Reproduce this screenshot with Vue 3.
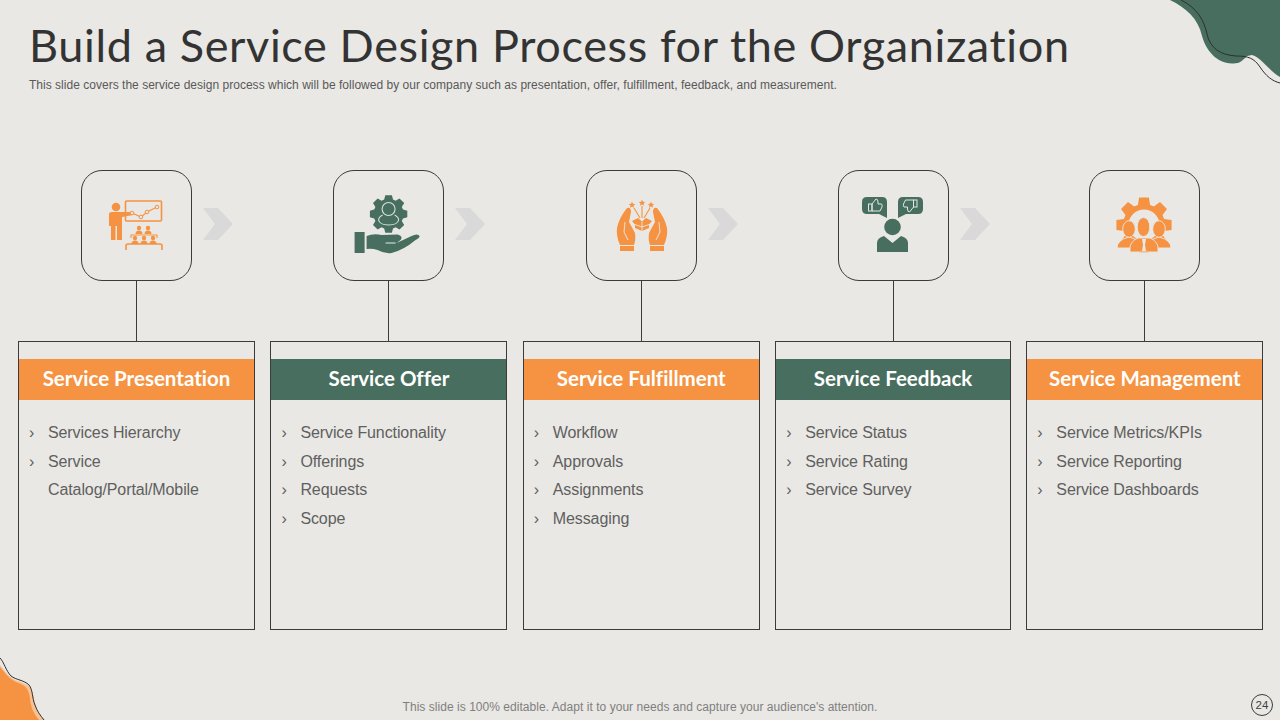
<template>
    <div class="slide">
        <svg class="blob-top" viewBox="1160 0 120 90">
            <path class="blob-green" d="M1170 0 C1186 8 1198 18 1202 36 C1206 50 1216 63 1232 63.5 C1240 64 1243 60 1247 56 L1252 55 C1262 58 1266 68 1280 77 V0 Z" />
            <path class="blob-line" d="M1181 0 C1197 8 1204 20 1207 34 C1210 48 1220 55 1236 56 C1248 56 1254 58 1260 67 C1266 76 1272 81 1280 83" />
        </svg>
        <svg class="blob-bottom" viewBox="0 650 60 70">
            <path class="blob-orange-light" d="M0 665 C5 671 9 678 18 681 C28 684 33 688 34 699 C35 708 38 714 44 720 H0 Z" />
            <path class="blob-orange" d="M0 667 C5 673 8 678 16 682 C25 685 29 688 30 699 C31 708 34 714 39 720 H0 Z" />
            <path class="blob-line" d="M0 658 C4 662 6 671 11 676 C16 680 24 680 29 685 C33 690 32 698 35 705 C37 711 40 715 44 720" />
        </svg>

        <header class="slide-head">
            <h1 class="slide-title">Build a Service Design Process for the Organization</h1>
            <p class="slide-sub">This slide covers the service design process which will be followed by our company such as presentation, offer, fulfillment, feedback, and measurement.</p>
        </header>

        <main class="columns">
            <section v-for="(col, i) in columns" :key="col.title" class="column">
                <div class="icon-row">
                    <div class="icon-box">
                        <!-- Presenter with chart and audience -->
                        <svg v-if="col.icon === 'presenter'" class="icon" viewBox="82 171 109 109">
                            <circle class="fo" cx="116" cy="207" r="4.3" />
                            <path class="fo" d="M109 214 Q109 212 112 212 H120 L133 212 V215 L122 217 V240 H117 V226 H115.5 V240 H111 V226 H109 Z" />
                            <rect class="so" x="125.5" y="201" width="36" height="20" rx="1" />
                            <polyline class="so thin" points="132,213 141,217 147,212 157,207" />
                            <circle v-for="p in chartDots" :key="p[0]" class="dot" :cx="p[0]" :cy="p[1]" r="1.8" />
                            <g v-for="p in audience" :key="p[0] + '-' + p[1]">
                                <circle class="fo" :cx="p[0]" :cy="p[1]" r="2.2" />
                                <path class="fo" :d="`M${p[0] - 3.5} ${p[1] + 6} q0 -3.5 3.5 -3.5 q3.5 0 3.5 3.5 z`" />
                            </g>
                            <path class="so thin" d="M131 238 V235 H157 V238" />
                            <path class="so" d="M126 250 V246 Q126 244 128 244 H160 Q162 244 162 246 V250" />
                        </svg>

                        <!-- Hand holding a gear with a person -->
                        <svg v-else-if="col.icon === 'hand'" class="icon" viewBox="334.4 171 109 109">
                            <path class="fg" :d="gearPath(389, 214, 19, 15, 8)" />
                            <circle class="sl" cx="389" cy="209" r="6.5" />
                            <path class="sl" d="M383 215 Q379 217 379 220 Q380 225 389 225 Q398 225 399 220 Q399 217 395 215" />
                            <rect class="fg" x="355" y="232" width="10" height="21" />
                            <path class="fg" d="M367 236 Q374 233 382 235 L398 234.5 Q404 236 401 240 L397 243 L412 236 Q418 233 420 236 Q420 238 416 240 Q404 250 392 253 Q385 254 378 250 Q372 248 367 249 Z" />
                            <path class="sl" d="M386 243 H396" />
                        </svg>

                        <!-- Two hands around an opening box -->
                        <svg v-else-if="col.icon === 'hands'" class="icon" viewBox="587 171 109 109">
                            <g v-for="m in ['', 'translate(1284 0) scale(-1 1)']" :key="m" :transform="m">
                                <path class="fo" d="M627 208 Q631 207 631 212 L629 222 L635 233 Q636 240 634 245 H620 Q616 236 617 228 Q619 218 627 208 Z" />
                                <path class="sb" d="M625 222 L624 232 L628 240" />
                                <rect class="fo" x="620" y="246" width="14" height="5" />
                            </g>
                            <path class="fo" d="M632 221 L638 218 L642 221.5 L646 218 L652 221 L649 224.5 V228 L642 231 L635 228 V224.5 Z" />
                            <path class="sb" d="M635 224.5 L642 227 L649 224.5 M642 221.5 V231" />
                            <path class="so thin" d="M640 218 L634 208 M642 218 V206 M644 218 L650 208" />
                            <path v-for="s in stars" :key="s[0]" class="fo" :d="starPath(s[0], s[1], 3.5)" />
                        </svg>

                        <!-- Person with thumbs up and down bubbles -->
                        <svg v-else-if="col.icon === 'feedback'" class="icon" viewBox="839 171 109 109">
                            <path class="fg" d="M867 197 H882 Q887 197 887 202 V218 L879 214 H867 Q862 214 862 209 V202 Q862 197 867 197 Z" />
                            <path class="fg" d="M903 197 H918 Q923 197 923 202 V209 Q923 214 918 214 H906 L898 218 V202 Q898 197 903 197 Z" />
                            <g class="thumb">
                                <rect x="868.5" y="204" width="3.5" height="7" />
                                <path d="M872 204 L876 199 Q878 199 878 202 V204 H881.5 Q882.5 205 882 207 L880 211 H872 Z" />
                            </g>
                            <g class="thumb" transform="rotate(180 910.5 205.5)">
                                <rect x="904" y="204" width="3.5" height="7" />
                                <path d="M907.5 204 L911.5 199 Q913.5 199 913.5 202 V204 H917 Q918 205 917.5 207 L915.5 211 H907.5 Z" />
                            </g>
                            <circle class="fg" cx="892.5" cy="227" r="8.3" />
                            <path class="fg" d="M877 252 V243 Q877 238 884 236 L892.5 243 L901 236 Q908 238 908 243 V252 Z" />
                        </svg>

                        <!-- Team in front of a gear -->
                        <svg v-else class="icon" viewBox="1090 171 109 109">
                            <path class="fo" :d="gearPath(1144, 225, 28, 21, 8)" />
                            <circle class="fb" cx="1144" cy="225" r="15.5" />
                            <g v-for="x in [1129, 1159]" :key="x">
                                <path class="fo edge" :d="`M${x - 12} 248 Q${x - 12} 240 ${x} 237 Q${x + 12} 240 ${x + 12} 248 Z`" />
                                <ellipse class="fo edge" :cx="x" :cy="229" rx="6.3" ry="8.3" />
                            </g>
                            <path class="fo edge" d="M1130 252 V247 Q1131 241 1138 238 H1150 Q1157 241 1158 247 V252 Z" />
                            <ellipse class="fo edge" cx="1143.5" cy="227" rx="6.3" ry="9.5" />
                            <path class="fb" d="M1142 239 H1146 L1145 245 L1146 251 H1142 L1143 245 Z" />
                        </svg>
                    </div>
                    <svg v-if="i < columns.length - 1" class="chevron" viewBox="0 0 30 32">
                        <path d="M0 0 H15 L30 16 L15 32 H0 L12 16 Z" />
                    </svg>
                </div>
                <div class="connector"></div>
                <div class="card">
                    <h2 class="card-title" :class="col.tone">{{ col.title }}</h2>
                    <ul class="card-list">
                        <li v-for="item in col.items" :key="item">{{ item }}</li>
                    </ul>
                </div>
            </section>
        </main>

        <footer class="slide-foot">
            <p class="foot-text">This slide is 100% editable. Adapt it to your needs and capture your audience's attention.</p>
            <span class="page-num">24</span>
        </footer>
    </div>
</template>

<script setup>
const columns = [
    { title: 'Service Presentation', tone: 'orange', icon: 'presenter', items: ['Services Hierarchy', 'Service Catalog/Portal/Mobile'] },
    { title: 'Service Offer', tone: 'green', icon: 'hand', items: ['Service Functionality', 'Offerings', 'Requests', 'Scope'] },
    { title: 'Service Fulfillment', tone: 'orange', icon: 'hands', items: ['Workflow', 'Approvals', 'Assignments', 'Messaging'] },
    { title: 'Service Feedback', tone: 'green', icon: 'feedback', items: ['Service Status', 'Service Rating', 'Service Survey'] },
    { title: 'Service Management', tone: 'orange', icon: 'team', items: ['Service Metrics/KPIs', 'Service Reporting', 'Service Dashboards'] },
]

const chartDots = [[132, 213], [141, 217], [147, 212], [157, 207]]
const audience = [[139, 228], [148, 228], [135, 238], [144, 238], [153, 238]]
const stars = [[632, 205], [642, 203], [651, 205]]

// Gear outline with square-ish teeth
const gearPath = (cx, cy, outer, inner, teeth) => {
    const step = (Math.PI * 2) / teeth
    const pts = []
    for (let i = 0; i < teeth; i++) {
        const a = i * step - Math.PI / 2
        const spots = [[inner, -0.5], [outer, -0.3], [outer, 0.3], [inner, 0.5]]
        for (const [r, k] of spots) {
            pts.push(`${(cx + r * Math.cos(a + k * step * 0.75)).toFixed(1)} ${(cy + r * Math.sin(a + k * step * 0.75)).toFixed(1)}`)
        }
    }
    return `M${pts.join(' L')} Z`
}

const starPath = (cx, cy, r) => {
    const pts = []
    for (let i = 0; i < 10; i++) {
        const a = (i * Math.PI) / 5 - Math.PI / 2
        const d = i % 2 ? r * 0.45 : r
        pts.push(`${(cx + d * Math.cos(a)).toFixed(1)} ${(cy + d * Math.sin(a)).toFixed(1)}`)
    }
    return `M${pts.join(' L')} Z`
}
</script>

<style>
body {
    margin: 0;
}
</style>

<style scoped>
.slide {
    position: relative;
    width: 1280px;
    height: 720px;
    overflow: hidden;
    background-color: #e9e8e4;
    font-family: "Liberation Sans", Arial, sans-serif;
    color: #595959;
}

.blob-top {
    position: absolute;
    top: 0;
    right: 0;
    width: 120px;
    height: 90px;
}

.blob-bottom {
    position: absolute;
    left: 0;
    bottom: 0;
    width: 60px;
    height: 70px;
}

.blob-green { fill: #476e5e; }
.blob-orange { fill: #f59342; }
.blob-orange-light { fill: #f8c193; }
.blob-line { fill: none; stroke: #2f2f2f; stroke-width: 1; }

.slide-head {
    padding: 17px 0 0 29px;
}

.slide-title {
    margin: 0;
    font-family: Lato, "Open Sans", sans-serif;
    font-size: 45px;
    font-weight: 400;
    line-height: 56px;
    letter-spacing: 0.63px;
    color: #333333;
}

.slide-sub {
    margin: 4px 0 0;
    font-size: 12px;
    line-height: 16px;
    letter-spacing: 0.02px;
    color: #595959;
}

.columns {
    display: grid;
    grid-template-columns: 237px 237px 237px 235.8px 237px;
    column-gap: 15.4px;
    margin-top: 77px;
    padding-left: 18px;
}

.column {
    display: flex;
    flex-direction: column;
    align-items: center;
}

.icon-row {
    position: relative;
    width: 111px;
}

.icon-box {
    box-sizing: border-box;
    width: 111px;
    height: 111px;
    border: 1px solid #3b3b3b;
    border-radius: 21px;
}

.icon {
    display: block;
    width: 109px;
    height: 109px;
}

.chevron {
    position: absolute;
    top: 38px;
    left: 122px;
    width: 30px;
    height: 32px;
    fill: #d9d9d9;
}

.fo { fill: #f59342; }
.fg { fill: #476e5e; }
.fb { fill: #e9e8e4; }
.so { fill: none; stroke: #f59342; stroke-width: 1.6; }
.so.thin { stroke-width: 1.1; }
.sl { fill: none; stroke: #d5e3dc; stroke-width: 1.1; }
.sb { fill: none; stroke: #e9e8e4; stroke-width: 0.9; }
.dot { fill: #e9e8e4; stroke: #f59342; stroke-width: 1; }
.edge { stroke: #e9e8e4; stroke-width: 0.9; }
.thumb { fill: none; stroke: #dfe9e4; stroke-width: 1; }

.connector {
    width: 1px;
    height: 60px;
    background-color: #3b3b3b;
}

.card {
    box-sizing: border-box;
    width: 100%;
    height: 289px;
    padding-top: 17px;
    border: 1px solid #3b3b3b;
}

.card-title {
    margin: 0;
    height: 41px;
    font-family: Lato, "Open Sans", sans-serif;
    font-size: 20.5px;
    font-weight: 700;
    line-height: 39px;
    font-variant-ligatures: none;
    text-align: center;
    color: #ffffff;
}

.card-title.orange { background-color: #f59342; }
.card-title.green { background-color: #476e5e; }

.card-list {
    margin: 18.8px 0 0;
    padding: 0 16px 0 10px;
    list-style: none;
    font-size: 16px;
    line-height: 28.8px;
    letter-spacing: -0.1px;
    color: #5f5f5f;
}

.card-list li {
    margin-left: 19px;
}

.card-list li::before {
    content: "›";
    display: inline-block;
    width: 19px;
    margin-left: -19px;
}

.slide-foot {
    display: grid;
    grid-template-columns: 1fr auto 1fr;
    margin-top: 64px;
}

.foot-text {
    grid-column: 2;
    align-self: end;
    margin: 0 0 1px;
    font-size: 12px;
    line-height: 16px;
    letter-spacing: 0.04px;
    color: #7f7f7f;
}

.page-num {
    grid-column: 3;
    justify-self: end;
    box-sizing: border-box;
    width: 22px;
    height: 22px;
    margin-right: 7px;
    border: 1px solid #3b3b3b;
    border-radius: 50%;
    font-size: 11.5px;
    line-height: 20px;
    text-align: center;
    color: #404040;
}
</style>
